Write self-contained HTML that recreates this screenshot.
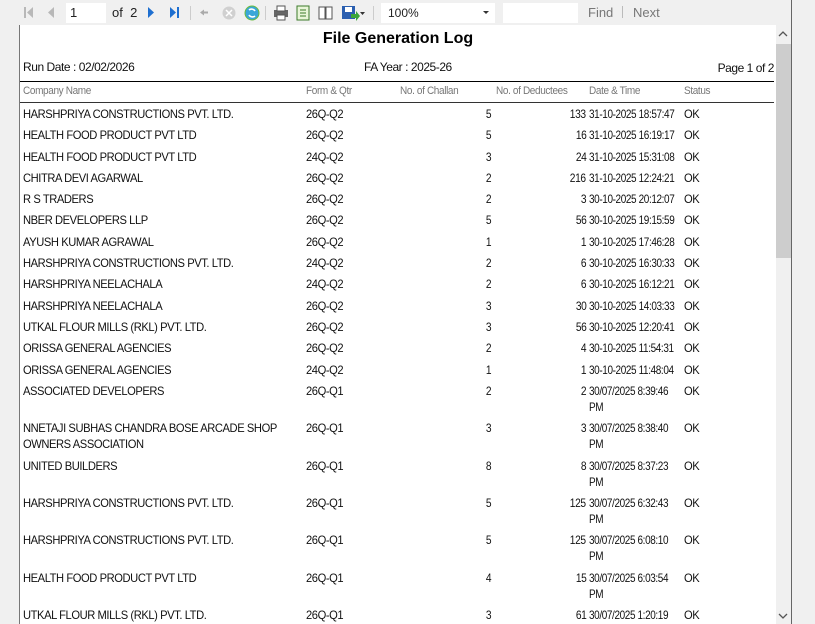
<!DOCTYPE html>
<html><head><meta charset="utf-8"><style>
body{margin:0;width:815px;height:624px;overflow:hidden;background:#f0f0f0;font-family:"Liberation Sans",Arial,sans-serif;position:relative}
.a{position:absolute;white-space:nowrap}
#page{position:absolute;left:19px;top:25px;width:756px;height:599px;background:#fff;border-left:1px solid #777;overflow:hidden}
.h{position:absolute;font-size:11px;letter-spacing:-0.4px;color:#777;white-space:nowrap;transform:scaleX(0.91);transform-origin:left}
.t{position:absolute;font-size:12px;letter-spacing:-0.45px;color:#111;line-height:16px;white-space:nowrap}
.row{position:absolute;left:0;width:756px;height:40px}
.row span{position:absolute;top:0;font-size:12px;letter-spacing:-0.45px;color:#111;line-height:16px;white-space:nowrap;transform:scaleX(0.93);transform-origin:left}
.c1{left:3px}.c2{left:286px}.c3{right:285px}.c4{right:190px}.c5{left:569px}.c6{left:664px}
.row .c3,.row .c4{transform-origin:right;transform:scaleX(0.85)}
.row .c5{transform:scaleX(0.83)}
</style></head><body>
<div class="a" style="left:791px;top:0;width:1px;height:624px;background:#666"></div>
<svg class="a" style="left:0;top:0" width="380" height="25">
<g fill="#b8b8b8"><rect x="24" y="7" width="2" height="11"/><path d="M33 7v11l-6-5.5z"/><path d="M54 7v11l-6-5.5z"/></g>
<g fill="#1e6fd0"><path d="M148 7v11l6-5.5z"/><path d="M170 7v11l6-5.5z"/><rect x="177" y="7" width="2" height="11"/></g>
<rect x="190" y="6" width="1" height="14" fill="#ccc"/>
<path d="M200 12.5l4-3v2h4v2h-4v2z" fill="#aaa"/>
<circle cx="229" cy="13" r="6.5" fill="#d0d0d0"/><path d="M226 10l6 6M232 10l-6 6" stroke="#fff" stroke-width="1.5"/>
<circle cx="252" cy="13" r="7" fill="#3aa6d8"/><path d="M249 10a4 4 0 0 1 6 1M255 16a4 4 0 0 1-6-1" stroke="#fff" stroke-width="1.6" fill="none"/><circle cx="252" cy="13" r="7" fill="none" stroke="#6bbb3a" stroke-width="1"/>
<rect x="265" y="6" width="1" height="14" fill="#ccc"/>
<rect x="274" y="10" width="14" height="7" fill="#666"/><rect x="277" y="6" width="8" height="5" fill="#fff" stroke="#555"/><rect x="277" y="15" width="8" height="5" fill="#fff" stroke="#555"/>
<rect x="297" y="6" width="12" height="14" fill="#e8f5d8" stroke="#3d7a2a"/><path d="M300 10h6M300 13h6M300 16h6" stroke="#3d7a2a"/>
<path d="M319 7h6v12h-6zM326 7h6v12h-6z" fill="#fff" stroke="#555"/>
<rect x="342" y="6" width="13" height="13" fill="#2b5fb0"/><rect x="345" y="7" width="7" height="5" fill="#fff"/><path d="M351 14h5v-3l4 5-4 5v-3h-5z" fill="#3aa63a"/>
<path d="M360 12h5l-2.5 3z" fill="#333"/>
<rect x="373" y="6" width="1" height="14" fill="#ccc"/>
</svg>
<div class="a" style="left:66px;top:3px;width:40px;height:20px;background:#fff"></div>
<div class="a" style="left:70px;top:5px;font-size:13px;color:#222">1</div>
<div class="a" style="left:112px;top:5px;font-size:13px;color:#222">of &nbsp;2</div>
<div class="a" style="left:381px;top:3px;width:114px;height:20px;background:#fff"></div>
<div class="a" style="left:388px;top:6px;font-size:12px;color:#222">100%</div>
<svg class="a" style="left:483px;top:11px" width="7" height="4"><path d="M0 0h6l-3 3z" fill="#333"/></svg>
<div class="a" style="left:503px;top:3px;width:75px;height:20px;background:#fff"></div>
<div class="a" style="left:588px;top:5px;font-size:13px;color:#777">Find</div>
<div class="a" style="left:622px;top:6px;width:1px;height:12px;background:#bbb"></div>
<div class="a" style="left:633px;top:5px;font-size:13px;color:#777">Next</div>
<div class="a" style="left:775px;top:25px;width:16px;height:599px;background:#f0f0f0"></div>
<div class="a" style="left:775px;top:44px;width:16px;height:214px;background:#cdcdcd"></div>
<svg class="a" style="left:778px;top:30px" width="10" height="8"><path d="M1 6l4-4 4 4" stroke="#555" stroke-width="1.3" fill="none"/></svg>
<svg class="a" style="left:778px;top:612px" width="10" height="8"><path d="M1 2l4 4 4-4" stroke="#555" stroke-width="1.3" fill="none"/></svg>
<div id="page">
<div class="a" style="left:0;width:756px;top:5px;text-align:center;font-size:16px;font-weight:bold;color:#000">File Generation Log</div>
<div class="t" style="left:3px;top:34px">Run Date : 02/02/2026</div>
<div class="t" style="left:344px;top:34px">FA Year : 2025-26</div>
<div class="t" style="right:2px;top:35px">Page 1 of 2</div>
<div class="a" style="left:0;top:56px;width:754px;height:1px;background:#000"></div>
<div class="h" style="left:3px;top:60px">Company Name</div>
<div class="h" style="left:286px;top:60px">Form &amp; Qtr</div>
<div class="h" style="left:380px;top:60px">No. of Challan</div>
<div class="h" style="left:476px;top:60px">No. of Deductees</div>
<div class="h" style="left:569px;top:60px">Date &amp; Time</div>
<div class="h" style="left:664px;top:60px">Status</div>
<div class="a" style="left:0;top:77px;width:754px;height:1px;background:#333"></div>

<div class="row" style="top:81px"><span class="c1">HARSHPRIYA CONSTRUCTIONS PVT. LTD.</span><span class="c2">26Q-Q2</span><span class="c3">5</span><span class="c4">133</span><span class="c5">31-10-2025 18:57:47</span><span class="c6">OK</span></div>
<div class="row" style="top:102px"><span class="c1">HEALTH FOOD PRODUCT PVT LTD</span><span class="c2">26Q-Q2</span><span class="c3">5</span><span class="c4">16</span><span class="c5">31-10-2025 16:19:17</span><span class="c6">OK</span></div>
<div class="row" style="top:124px"><span class="c1">HEALTH FOOD PRODUCT PVT LTD</span><span class="c2">24Q-Q2</span><span class="c3">3</span><span class="c4">24</span><span class="c5">31-10-2025 15:31:08</span><span class="c6">OK</span></div>
<div class="row" style="top:145px"><span class="c1">CHITRA DEVI AGARWAL</span><span class="c2">26Q-Q2</span><span class="c3">2</span><span class="c4">216</span><span class="c5">31-10-2025 12:24:21</span><span class="c6">OK</span></div>
<div class="row" style="top:166px"><span class="c1">R S TRADERS</span><span class="c2">26Q-Q2</span><span class="c3">2</span><span class="c4">3</span><span class="c5">30-10-2025 20:12:07</span><span class="c6">OK</span></div>
<div class="row" style="top:187px"><span class="c1">NBER DEVELOPERS LLP</span><span class="c2">26Q-Q2</span><span class="c3">5</span><span class="c4">56</span><span class="c5">30-10-2025 19:15:59</span><span class="c6">OK</span></div>
<div class="row" style="top:209px"><span class="c1">AYUSH KUMAR AGRAWAL</span><span class="c2">26Q-Q2</span><span class="c3">1</span><span class="c4">1</span><span class="c5">30-10-2025 17:46:28</span><span class="c6">OK</span></div>
<div class="row" style="top:230px"><span class="c1">HARSHPRIYA CONSTRUCTIONS PVT. LTD.</span><span class="c2">24Q-Q2</span><span class="c3">2</span><span class="c4">6</span><span class="c5">30-10-2025 16:30:33</span><span class="c6">OK</span></div>
<div class="row" style="top:251px"><span class="c1">HARSHPRIYA NEELACHALA</span><span class="c2">24Q-Q2</span><span class="c3">2</span><span class="c4">6</span><span class="c5">30-10-2025 16:12:21</span><span class="c6">OK</span></div>
<div class="row" style="top:273px"><span class="c1">HARSHPRIYA NEELACHALA</span><span class="c2">26Q-Q2</span><span class="c3">3</span><span class="c4">30</span><span class="c5">30-10-2025 14:03:33</span><span class="c6">OK</span></div>
<div class="row" style="top:294px"><span class="c1">UTKAL FLOUR MILLS (RKL) PVT. LTD.</span><span class="c2">26Q-Q2</span><span class="c3">3</span><span class="c4">56</span><span class="c5">30-10-2025 12:20:41</span><span class="c6">OK</span></div>
<div class="row" style="top:315px"><span class="c1">ORISSA GENERAL AGENCIES</span><span class="c2">26Q-Q2</span><span class="c3">2</span><span class="c4">4</span><span class="c5">30-10-2025 11:54:31</span><span class="c6">OK</span></div>
<div class="row" style="top:337px"><span class="c1">ORISSA GENERAL AGENCIES</span><span class="c2">24Q-Q2</span><span class="c3">1</span><span class="c4">1</span><span class="c5">30-10-2025 11:48:04</span><span class="c6">OK</span></div>
<div class="row" style="top:358px"><span class="c1">ASSOCIATED DEVELOPERS</span><span class="c2">26Q-Q1</span><span class="c3">2</span><span class="c4">2</span><span class="c5">30/07/2025 8:39:46<br>PM</span><span class="c6">OK</span></div>
<div class="row" style="top:395px"><span class="c1">NNETAJI SUBHAS CHANDRA BOSE ARCADE SHOP<br>OWNERS ASSOCIATION</span><span class="c2">26Q-Q1</span><span class="c3">3</span><span class="c4">3</span><span class="c5">30/07/2025 8:38:40<br>PM</span><span class="c6">OK</span></div>
<div class="row" style="top:433px"><span class="c1">UNITED BUILDERS</span><span class="c2">26Q-Q1</span><span class="c3">8</span><span class="c4">8</span><span class="c5">30/07/2025 8:37:23<br>PM</span><span class="c6">OK</span></div>
<div class="row" style="top:470px"><span class="c1">HARSHPRIYA CONSTRUCTIONS PVT. LTD.</span><span class="c2">26Q-Q1</span><span class="c3">5</span><span class="c4">125</span><span class="c5">30/07/2025 6:32:43<br>PM</span><span class="c6">OK</span></div>
<div class="row" style="top:507px"><span class="c1">HARSHPRIYA CONSTRUCTIONS PVT. LTD.</span><span class="c2">26Q-Q1</span><span class="c3">5</span><span class="c4">125</span><span class="c5">30/07/2025 6:08:10<br>PM</span><span class="c6">OK</span></div>
<div class="row" style="top:545px"><span class="c1">HEALTH FOOD PRODUCT PVT LTD</span><span class="c2">26Q-Q1</span><span class="c3">4</span><span class="c4">15</span><span class="c5">30/07/2025 6:03:54<br>PM</span><span class="c6">OK</span></div>
<div class="row" style="top:582px"><span class="c1">UTKAL FLOUR MILLS (RKL) PVT. LTD.</span><span class="c2">26Q-Q1</span><span class="c3">3</span><span class="c4">61</span><span class="c5">30/07/2025 1:20:19</span><span class="c6">OK</span></div>
</div>
</body></html>
